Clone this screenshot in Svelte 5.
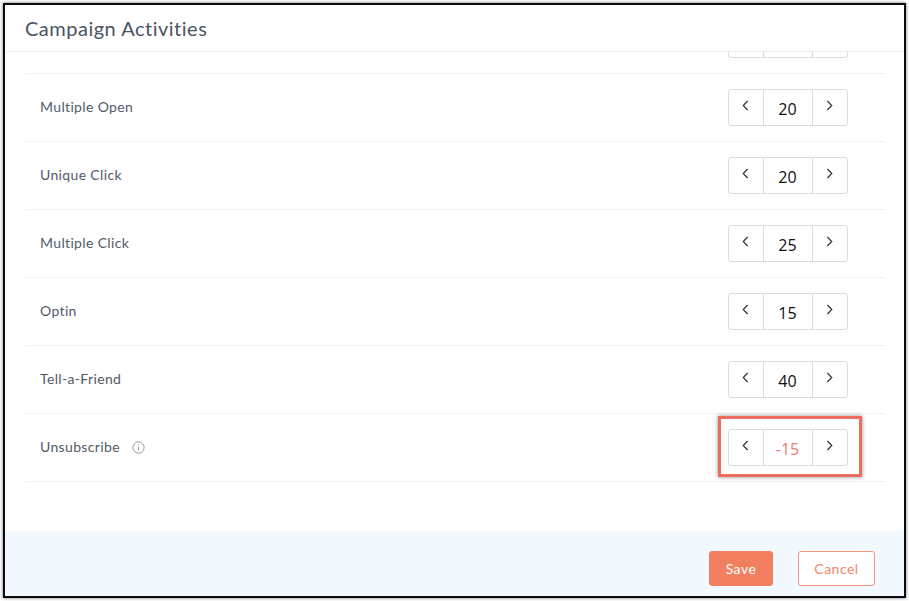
<script>
  const rows = [
    { label: '', value: '' },
    { label: 'Multiple Open', value: '20' },
    { label: 'Unique Click', value: '20' },
    { label: 'Multiple Click', value: '25' },
    { label: 'Optin', value: '15' },
    { label: 'Tell-a-Friend', value: '40' },
    { label: 'Unsubscribe', value: '-15', info: true, negative: true }
  ];
</script>

<div class="page">
  <div class="modal">
    <header class="head"><h1>Campaign Activities</h1></header>
    <main class="body">
      <div class="list">
        {#each rows as row}
          <div class="row">
            <div class="label">
              <span>{row.label}</span>
              {#if row.info}
                <svg class="info" width="13" height="13" viewBox="0 0 13 13" fill="none" stroke="#8e9499" stroke-width="1">
                  <circle cx="6.5" cy="6.5" r="5.6" />
                  <path d="M6.5 5.8v3.8" />
                  <circle cx="6.5" cy="3.8" r="0.65" fill="#8e9499" stroke="none" />
                </svg>
              {/if}
            </div>
            <div class="stepper" class:flagged={row.negative}>
              <div class="cell side">
                <svg width="7" height="11" viewBox="0 0 7 11" fill="none" stroke="#333b44" stroke-width="1.3"><path d="M5.6 1 1.3 5.5l4.3 4.5" /></svg>
              </div>
              <div class="cell mid" class:neg={row.negative}>{row.value}</div>
              <div class="cell side">
                <svg width="7" height="11" viewBox="0 0 7 11" fill="none" stroke="#333b44" stroke-width="1.3"><path d="M1.4 1l4.3 4.5L1.4 10" /></svg>
              </div>
            </div>
          </div>
        {/each}
      </div>
    </main>
    <footer class="foot">
      <button class="btn save">Save</button>
      <button class="btn cancel">Cancel</button>
    </footer>
  </div>
</div>

<style>
  :global(body) {
    margin: 0;
    background: #fff;
  }
  .page {
    width: 909px;
    height: 601px;
    padding: 3px;
    box-sizing: border-box;
    font-family: Lato, "Liberation Sans", sans-serif;
  }
  .modal {
    height: 595px;
    border: 2px solid #0c0c10;
    box-sizing: border-box;
    display: flex;
    flex-direction: column;
    background: #fff;
    box-shadow: 0 0 3px rgba(0, 0, 0, 0.6);
  }
  .head {
    height: 47px;
    flex: none;
    box-sizing: border-box;
    border-bottom: 1px solid #eceeef;
    padding: 9px 0 0 20px;
  }
  h1 {
    margin: 0;
    font-size: 20px;
    line-height: 28px;
    font-weight: 400;
    letter-spacing: 0.5px;
    color: #4a5463;
  }
  .body {
    flex: 1;
    overflow: hidden;
    padding: 0 19px 0 20px;
  }
  .list {
    margin-top: -46px;
  }
  .row {
    height: 68px;
    box-sizing: border-box;
    border-bottom: 1px solid #f0f1f2;
    display: flex;
    align-items: center;
    justify-content: space-between;
    padding: 0 37px 0 15px;
  }
  .label {
    display: flex;
    align-items: center;
    gap: 11px;
    font-size: 14px;
    line-height: 17px;
    letter-spacing: 0.35px;
    color: #525b69;
    margin-top: -2px;
  }
  .info {
    margin-top: 2px;
    margin-left: 1px;
  }
  .stepper {
    position: relative;
    width: 120px;
    height: 37px;
    box-sizing: border-box;
    border: 1px solid #dcdcdc;
    border-radius: 3px;
    display: flex;
    background: #fff;
  }
  .flagged::after {
    content: "";
    position: absolute;
    left: -11px;
    top: -14px;
    width: 144px;
    height: 61px;
    box-sizing: border-box;
    border: 3px solid #ec6c5e;
    box-shadow: 0 0 4px rgba(0, 0, 0, 0.45);
  }
  .cell {
    display: flex;
    align-items: center;
    justify-content: center;
  }
  .side {
    width: 34px;
    padding: 0 1px 5px 0;
    box-sizing: border-box;
  }
  .mid {
    flex: 1;
    border-left: 1px solid #dcdcdc;
    border-right: 1px solid #dcdcdc;
    font-family: "Open Sans", sans-serif;
    font-size: 16px;
    padding: 2px 1px 0 0;
    box-sizing: border-box;
    color: #111;
  }
  .mid.neg {
    color: #f0776c;
  }
  .foot {
    height: 65px;
    flex: none;
    box-sizing: border-box;
    background: #f1f8fe;
    display: flex;
    align-items: flex-start;
    justify-content: flex-end;
    gap: 25px;
    padding: 20px 29px 0 0;
  }
  .btn {
    height: 35px;
    box-sizing: border-box;
    border-radius: 3px;
    font-family: inherit;
    font-size: 14px;
    letter-spacing: 0.5px;
    padding: 0;
  }
  .save {
    width: 64px;
    background: #f27f5f;
    border: 1px solid #f27f5f;
    color: #fff;
  }
  .cancel {
    width: 77px;
    background: #fff;
    border: 1px solid #f4967c;
    color: #f4866a;
  }
</style>
